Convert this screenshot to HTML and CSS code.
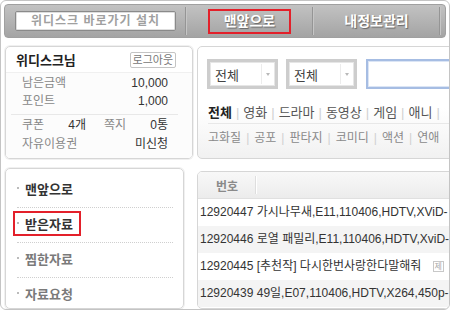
FILE: index.html
```html
<!DOCTYPE html>
<html lang="ko">
  <head>
    <meta charset="UTF-8" />
    <title>위디스크</title>
    <link rel="stylesheet" href="styles.css">
  </head>
  <body>
    <div class="frame">
      <!-- top bar -->
      <div class="topbar">
        <div class="install">위디스크 바로가기 설치</div>
        <span class="sep"></span>
        <div class="tab"><span class="mark">맨앞으로</span></div>
        <span class="sep"></span>
        <div class="tab">내정보관리</div>
        <span class="sep"></span>
      </div>

      <div class="main">
        <!-- left column -->
        <div class="left">
          <div class="userbox">
            <div class="user-head">
              <span class="user-name">위디스크님</span>
              <span class="logout">로그아웃</span>
            </div>
            <div class="user-body">
              <div class="group">
                <div class="row"><span>남은금액</span><b>10,000</b></div>
                <div class="row"><span>포인트</span><b>1,000</b></div>
              </div>
              <div class="group">
                <div class="row split">
                  <div class="cell"><span>쿠폰</span><b>4개</b></div>
                  <div class="cell"><span>쪽지</span><b>0통</b></div>
                </div>
                <div class="row"><span>자유이용권</span><b>미신청</b></div>
              </div>
            </div>
          </div>

          <div class="navbox">
            <div class="nav-item"><span class="bullet"></span>맨앞으로</div>
            <div class="nav-item"><span class="marked"><span class="bullet"></span>받은자료</span></div>
            <div class="nav-item dim"><span class="bullet"></span>찜한자료</div>
            <div class="nav-item dim"><span class="bullet"></span>자료요청</div>
          </div>
        </div>

        <!-- right column -->
        <div class="right">
          <div class="search">
            <div class="search-row">
              <div class="select"><span>전체</span><i class="arrow"></i></div>
              <div class="select"><span>전체</span><i class="arrow"></i></div>
              <div class="query"></div>
            </div>
            <div class="cats">
              <b>전체</b><i>|</i>영화<i>|</i>드라마<i>|</i>동영상<i>|</i>게임<i>|</i>애니<i>|</i>
            </div>
            <div class="genres">
              고화질<i>|</i>공포<i>|</i>판타지<i>|</i>코미디<i>|</i>액션<i>|</i>연애
            </div>
          </div>

          <div class="list">
            <div class="list-head"><span class="col-no">번호</span><span class="col-sep"></span></div>
            <div class="list-row">12920447 가시나무새,E11,110406,HDTV,XViD-</div>
            <div class="list-row alt">12920446 로열 패밀리,E11,110406,HDTV,XviD-</div>
            <div class="list-row">12920445 [추천작] 다시한번사랑한다말해줘 <span class="ico">제</span></div>
            <div class="list-row alt">12920439 49일,E07,110406,HDTV,X264,450p-</div>
          </div>
        </div>
      </div>
    </div>
  </body>
</html>
```

FILE: styles.css
```css
* {
  margin: 0;
  padding: 0;
  box-sizing: border-box;
}
body {
  font-family: "Liberation Sans", "Noto Sans CJK KR", sans-serif;
  font-size: 12px;
  color: #333;
  background: #fff;
}
.frame {
  width: 450px;
  height: 310px;
  border: 1px solid #c4c4c4;
  border-radius: 6px;
  padding: 3px 3px 0 3px;
  overflow: hidden;
}

/* top bar */
.topbar {
  display: flex;
  align-items: center;
  height: 34px;
  padding-left: 10px;
  background: linear-gradient(#c2c2c2, #a4a4a4);
  border: 1px solid #a0a0a0;
  border-radius: 4px;
}
.install {
  width: 161px;
  height: 20px;
  margin-right: 9px;
  line-height: 18px;
  text-align: center;
  color: #a0a0a0;
  font-weight: bold;
  letter-spacing: 1px;
  background: #fff;
  border: 1px solid #8a8a8a;
  border-radius: 2px;
  box-shadow: inset 0 0 0 1px #dedede;
}
.sep {
  width: 2px;
  height: 28px;
  border-left: 1px solid #959595;
  border-right: 1px solid #c6c6c6;
}
.tab {
  width: 125px;
  text-align: center;
  color: #fff;
  font-size: 14px;
  font-weight: bold;
  line-height: 21px;
  text-shadow: 1px 1px 1px #666;
}
.mark {
  display: inline-block;
  width: 83px;
  height: 25px;
  border: 2px solid #e3202a;
}

/* layout */
.main {
  display: flex;
  gap: 4px;
  margin-top: 8px;
  padding-left: 1px;
}
.left {
  display: flex;
  flex-direction: column;
  gap: 9px;
  width: 188px;
  flex-shrink: 0;
}
.right {
  display: flex;
  flex-direction: column;
  gap: 12px;
  width: 300px;
  flex-shrink: 0;
}

/* user box */
.userbox {
  height: 113px;
  border: 1px solid #d6d6d6;
  border-radius: 5px;
  box-shadow: 0 0 0 1px #f0f0f0;
  overflow: hidden;
}
.user-head {
  display: flex;
  justify-content: space-between;
  align-items: center;
  height: 26px;
  padding: 0 16px 0 10px;
  border-bottom: 1px solid #f0f0f0;
}
.user-name {
  font-size: 13px;
  font-weight: bold;
  color: #222;
}
.logout {
  height: 16px;
  padding: 0 2px;
  line-height: 14px;
  font-size: 11px;
  color: #777;
  border: 1px solid #c4c4c4;
  border-radius: 2px;
}
.user-body {
  height: 85px;
  background: #fcfcfc;
}
.group {
  margin: 0 14px 0 5px;
  padding: 1px 10px 1px 11px;
}
.group + .group {
  border-top: 1px solid #e8e8e8;
  padding-top: 1px;
}
.group:first-child {
  padding-bottom: 4px;
}
.row {
  display: flex;
  justify-content: space-between;
  height: 18px;
  line-height: 18px;
  color: #888;
}
.group + .group .row {
  height: 19px;
  line-height: 19px;
}
.row b {
  font-weight: normal;
  color: #333;
}
.split {
  gap: 18px;
}
.cell {
  display: flex;
  justify-content: space-between;
  flex: 1;
}

/* nav box */
.navbox {
  height: 141px;
  width: 179px;
  padding: 4px 10px 0 11px;
  border: 1px solid #d6d6d6;
  border-radius: 5px;
  box-shadow: 0 0 0 1px #f0f0f0;
}
.nav-item {
  display: flex;
  align-items: center;
  height: 35px;
  padding-bottom: 4px;
  border-bottom: 1px dotted #cfcfcf;
  font-size: 13px;
  font-weight: bold;
  color: #333;
}
.nav-item.dim {
  color: #7a7a7a;
}
.bullet {
  width: 2px;
  height: 2px;
  margin-right: 6px;
  background: #bbb;
}
.marked {
  display: flex;
  align-items: center;
  height: 25px;
  margin-left: -4px;
  padding: 0 6px 0 2px;
  border: 2px solid #e3202a;
}

/* search panel */
.search {
  height: 113px;
  padding: 12px 0 0 9px;
  border: 1px solid #d6d6d6;
  border-radius: 5px;
  background: linear-gradient(#fff 55%, #f1f1f1);
}
.search-row {
  display: flex;
  gap: 8px;
  height: 30px;
}
.select {
  display: flex;
  align-items: center;
  width: 71px;
  border: 3px solid #cdcdcd;
  background: #fff;
  box-shadow: inset 0 0 0 1px #e6e6e6;
  font-size: 13px;
  color: #444;
}
.select span {
  flex: 1;
  padding-left: 5px;
}
.arrow {
  width: 14px;
  height: 20px;
  border-left: 1px solid #ececec;
  position: relative;
}
.arrow::after {
  content: "";
  position: absolute;
  left: 4px;
  top: 9px;
  border: 2px solid transparent;
  border-top: 3px solid #b9b9b9;
}
.query {
  flex: 1;
  margin-left: 1px;
  border: 2px solid #a6bde3;
  box-shadow: inset 0 0 0 1px #dbe5f5;
  background: #fff;
}
.cats {
  margin-top: 14px;
  margin-left: 1px;
  height: 21px;
  line-height: 20px;
  font-size: 13px;
  color: #555;
  white-space: nowrap;
  border-bottom: 1px solid #e8e8e8;
}
.cats b {
  color: #222;
}
.cats i,
.genres i {
  font-style: normal;
  color: #d0d0d0;
  margin: 0 4px;
}
.genres {
  margin-left: 1px;
  padding-top: 4px;
  line-height: 20px;
  color: #8a8a8a;
  white-space: nowrap;
}
.genres i {
  margin: 0 5px;
}

/* list */
.list {
  height: 138px;
  border: 1px solid #d6d6d6;
  border-radius: 5px;
  overflow: hidden;
}
.list-head {
  display: flex;
  align-items: center;
  height: 27px;
  background: linear-gradient(#f8f8f8, #ececec);
  border-bottom: 1px solid #e0e0e0;
}
.col-no {
  width: 57px;
  padding-left: 18px;
  font-weight: bold;
  color: #8a8a8a;
}
.col-sep {
  width: 2px;
  height: 18px;
  border-left: 1px solid #dedede;
  border-right: 1px solid #fff;
}
.list-row {
  height: 27px;
  padding-left: 2px;
  line-height: 27px;
  white-space: nowrap;
  color: #333;
}
.list-row.alt {
  background: #f4f4f4;
}
.ico {
  display: inline-block;
  width: 11px;
  height: 11px;
  margin-left: 8px;
  font-size: 8px;
  line-height: 9px;
  text-align: center;
  color: #aaa;
  border: 1px solid #c8c8c8;
  vertical-align: middle;
}
```
